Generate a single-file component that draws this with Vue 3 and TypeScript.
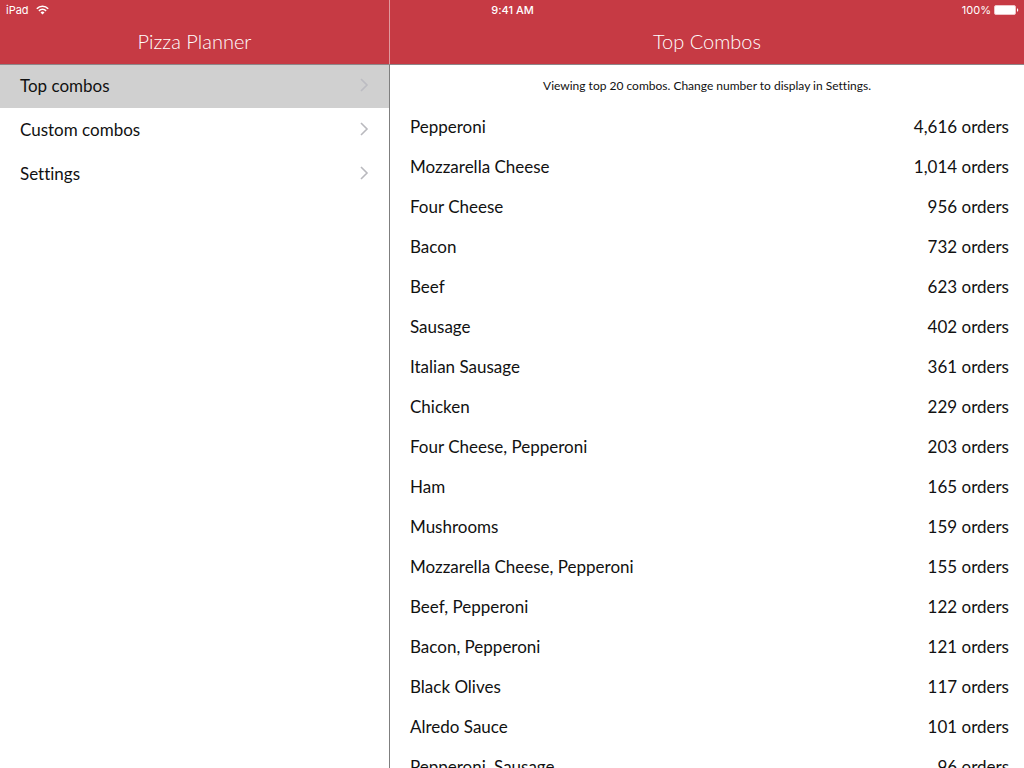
<script setup lang="ts">
import { ref } from 'vue'

interface Combo {
  name: string
  orders: number
}

const menu: string[] = ['Top combos', 'Custom combos', 'Settings']
const selected = ref<string>('Top combos')

const combos: Combo[] = [
  { name: 'Pepperoni', orders: 4616 },
  { name: 'Mozzarella Cheese', orders: 1014 },
  { name: 'Four Cheese', orders: 956 },
  { name: 'Bacon', orders: 732 },
  { name: 'Beef', orders: 623 },
  { name: 'Sausage', orders: 402 },
  { name: 'Italian Sausage', orders: 361 },
  { name: 'Chicken', orders: 229 },
  { name: 'Four Cheese, Pepperoni', orders: 203 },
  { name: 'Ham', orders: 165 },
  { name: 'Mushrooms', orders: 159 },
  { name: 'Mozzarella Cheese, Pepperoni', orders: 155 },
  { name: 'Beef, Pepperoni', orders: 122 },
  { name: 'Bacon, Pepperoni', orders: 121 },
  { name: 'Black Olives', orders: 117 },
  { name: 'Alredo Sauce', orders: 101 },
  { name: 'Pepperoni, Sausage', orders: 96 },
]

const formatOrders = (n: number): string => `${n.toLocaleString('en-US')} orders`
</script>

<template>
  <div class="app">
    <div class="status">
      <div class="status-left">
        <span>iPad</span>
        <svg class="wifi" width="13" height="10" viewBox="0 0 13 10" aria-hidden="true">
          <path d="M0.8 3.7C4 0.4 9 0.4 12.2 3.7" />
          <path d="M2.9 5.8C5 3.8 8 3.8 10.1 5.8" />
          <path class="dot" d="M4.5 7.4C5.7 6.3 7.3 6.3 8.5 7.4L6.5 9.5Z" />
        </svg>
      </div>
      <span class="clock">9:41 AM</span>
      <div class="status-right">
        <span>100%</span>
        <svg width="25" height="10" viewBox="0 0 25 10" aria-hidden="true">
          <rect x="0.5" y="0.5" width="21" height="9" rx="1.5" fill="#fff" stroke="#efc4c8" />
          <path d="M23 3.2C24.6 3.5 24.6 6.5 23 6.8Z" fill="#fff" />
        </svg>
      </div>
    </div>

    <aside class="sidebar">
      <header class="bar"><h1>Pizza Planner</h1></header>
      <nav>
        <button
          v-for="item in menu"
          :key="item"
          type="button"
          class="menu-item"
          :class="{ active: item === selected }"
          @click="selected = item"
        >
          <span>{{ item }}</span>
          <svg width="9" height="14" viewBox="0 0 9 14" aria-hidden="true">
            <path d="M1 1L7 7L1 13" />
          </svg>
        </button>
      </nav>
    </aside>

    <main class="detail">
      <header class="bar"><h1>Top Combos</h1></header>
      <div class="scroll">
        <p class="note">Viewing top 20 combos. Change number to display in Settings.</p>
        <ul class="list">
          <li v-for="combo in combos" :key="combo.name">
            <span>{{ combo.name }}</span>
            <span>{{ formatOrders(combo.orders) }}</span>
          </li>
        </ul>
      </div>
    </main>
  </div>
</template>

<style>
body {
  margin: 0;
  background: #fff;
}
</style>

<style scoped>
.app {
  position: relative;
  display: grid;
  grid-template-columns: minmax(240px, 390px) minmax(0, 1fr);
  height: 100vh;
  overflow: hidden;
  font-family: Lato, "Open Sans", sans-serif;
  font-size: 17px;
  font-variant-ligatures: none;
  color: #111;
}

.status {
  position: absolute;
  z-index: 2;
  top: 0;
  left: 0;
  right: 0;
  display: grid;
  grid-template-columns: 1fr auto 1fr;
  align-items: center;
  height: 20px;
  padding: 0 5px 0 6px;
  font-family: Inter, Roboto, sans-serif;
  font-size: 11px;
  color: #fff;
}

.status-left,
.status-right {
  display: flex;
  align-items: center;
  gap: 7px;
}

.status-right {
  justify-content: flex-end;
  gap: 3px;
}

.clock {
  font-weight: 500;
}

.wifi path {
  fill: none;
  stroke: #fff;
  stroke-width: 1.6;
}

.wifi .dot {
  fill: #fff;
  stroke: none;
}

.sidebar,
.detail {
  display: flex;
  flex-direction: column;
  min-height: 0;
}

.sidebar {
  border-right: 1px solid #7f7f7f;
}

.bar {
  position: relative;
  z-index: 1;
  flex: none;
  box-sizing: border-box;
  height: 64px;
  padding-top: 20px;
  background: #c63a44;
  box-shadow: 0 1px 0 #8e8588;
}

.sidebar .bar {
  margin-right: -1px;
  border-right: 1px solid #e0999e;
}

h1 {
  margin: 0;
  font-size: 20px;
  font-weight: 300;
  line-height: 42px;
  text-align: center;
  color: #fff;
}

.menu-item {
  display: flex;
  align-items: center;
  justify-content: space-between;
  width: 100%;
  height: 44px;
  padding: 0 20px 2px;
  border: 0;
  background: #fff;
  font: inherit;
  font-variant-ligatures: none;
  color: inherit;
  text-align: left;
}

.menu-item.active {
  background: #d0d0d0;
}

.menu-item path {
  fill: none;
  stroke: #b9b9be;
  stroke-width: 1.6;
}

.menu-item.active path {
  stroke: #bcbcc2;
}

.scroll {
  flex: 1;
  min-height: 0;
  overflow-y: auto;
  scrollbar-width: none;
}

.note {
  margin: 0;
  font-size: 12px;
  line-height: 43px;
  text-align: center;
}

.list {
  margin: 0;
  padding: 0 15px 0 20px;
  list-style: none;
}

.list li {
  display: flex;
  justify-content: space-between;
  line-height: 40px;
}
</style>
